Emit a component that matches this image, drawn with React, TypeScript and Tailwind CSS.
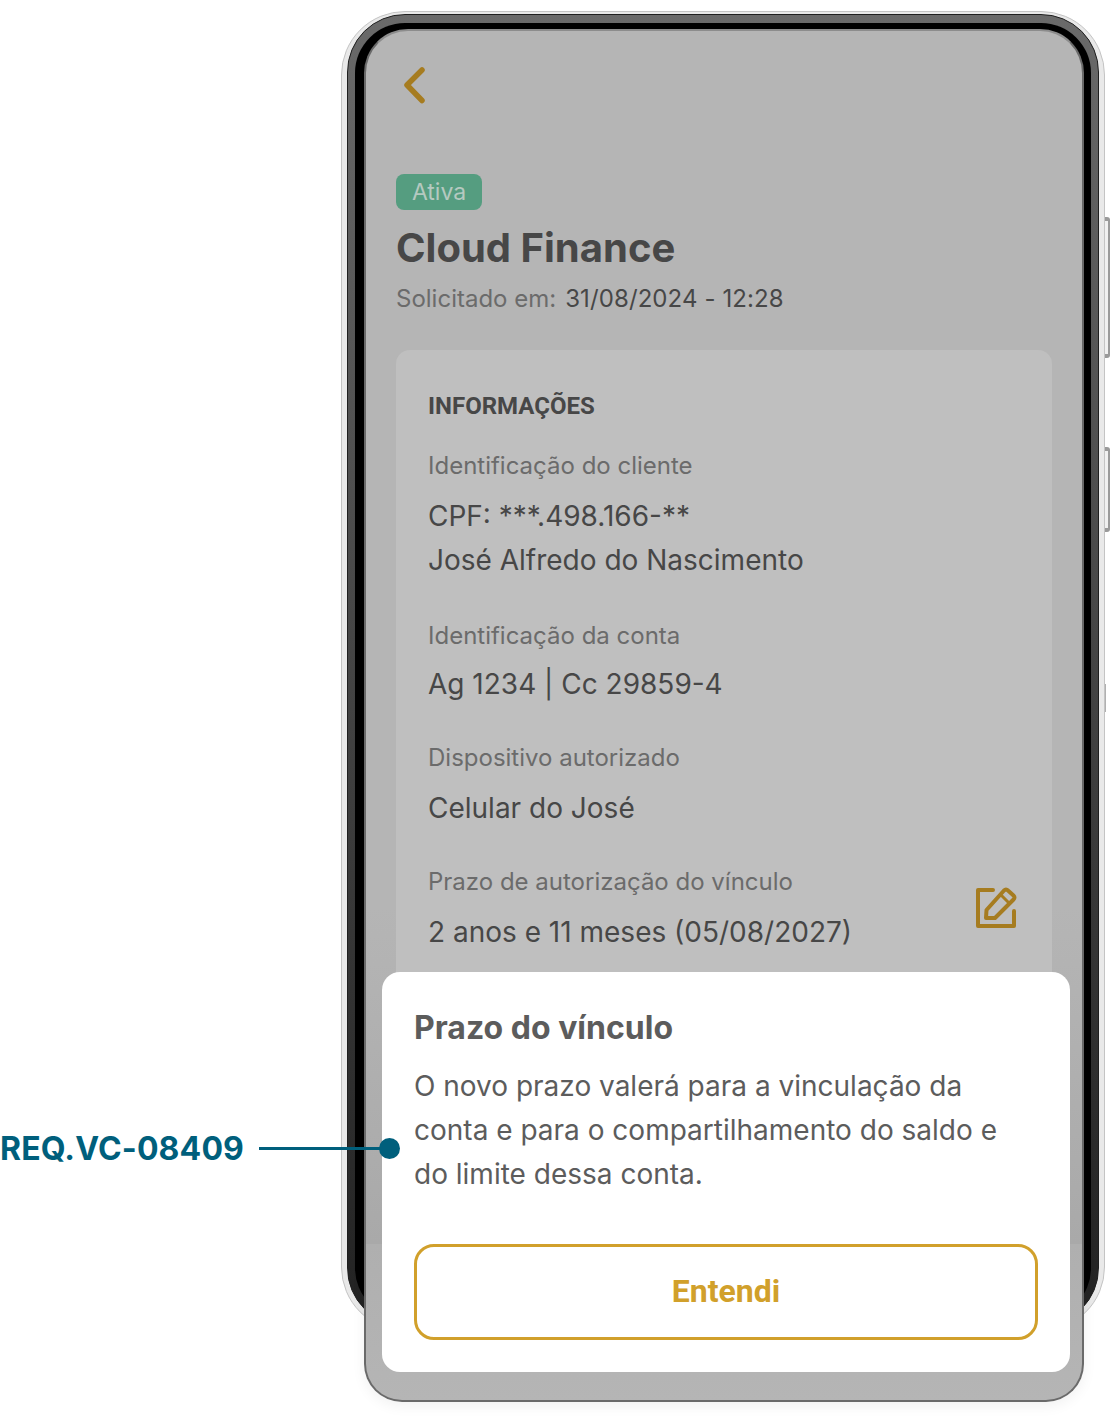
const gold = "#a67c20";

function Field({ label, children, className, valueGap }: { label: string; children: React.ReactNode; className?: string; valueGap: string }) {
  return (
    <div className={className}>
      <p className="text-[24px] leading-[36px] text-[#6b6b6b]">{label}</p>
      <div className={`${valueGap} text-[28px] leading-[44px] text-[#474747]`}>{children}</div>
    </div>
  );
}

function PhoneFrame() {
  return (
    <div className="absolute left-[341px] top-[11px] h-[1320px] w-[764px] rounded-[64px] border-[1px] border-[#c4c4c4] bg-[#e9e9e9] px-[5px] pt-[2px] pb-[4px]">
      <div className="h-full w-full rounded-[58px] border-[1px] border-[#1f1f1f] bg-gradient-to-b from-[#6a6a6a] via-[#444444] to-[#222222] px-[7px] pt-[8px] pb-[7px]">
        <div className="h-full w-full rounded-[50px] bg-black" />
      </div>
    </div>
  );
}

function SideButtons() {
  return (
    <>
      <div className="absolute left-[1105px] top-[217px] h-[141px] w-[5px] rounded-r-[3px] border-y-[4px] border-r-[2px] border-[#9a9a9a] bg-[#f0f0f0]" />
      <div className="absolute left-[1105px] top-[447px] h-[85px] w-[5px] rounded-r-[3px] border-y-[4px] border-r-[2px] border-[#9a9a9a] bg-[#f0f0f0]" />
      <div className="absolute left-[1105px] top-[684px] h-[28px] w-[1px] bg-[#b0b0b0]" />
    </>
  );
}

export default function App() {
  return (
    <div className="relative h-[1428px] w-[1118px] overflow-hidden bg-white font-['Inter',sans-serif]">
      <PhoneFrame />
      <SideButtons />

      <div className="relative ml-[364px] pt-[29px]">
        <div className="relative h-[1373px] w-[720px] overflow-hidden rounded-t-[44px] rounded-b-[38px] border-[2px] border-[#6a6a6a] border-t-[#8c8c8c] bg-[linear-gradient(#b5b5b5_0%,#b5b5b5_64%,#a9a9a9_88.6%,#afafaf_88.6%,#b5b5b5_100%)] shadow-[0_4px_14px_rgba(0,0,0,0.06)]">
          <div className="px-[30px] pt-[35px]">
            <svg width="26" height="38" viewBox="0 0 26 38" className="ml-[5px]" fill="none">
              <path d="M21 4 L6 19 L21 34.5" stroke={gold} strokeWidth="5.5" strokeLinecap="round" strokeLinejoin="round" />
            </svg>

            <div className="mt-[70px] flex h-[36px] w-[86px] items-center justify-center rounded-[8px] bg-[#559d80] text-[23px] text-[#b5c9c0]">
              Ativa
            </div>
            <h1 className="mt-[12px] text-[40px] font-bold leading-[52px] text-[#474747]">Cloud Finance</h1>
            <p className="mt-[7px] flex gap-[9px] text-[24px] leading-[36px] text-[#6b6b6b]">
              Solicitado em:
              <span className="tracking-[0.1px] text-[#474747]">31/08/2024 - 12:28</span>
            </p>

            <section className="mt-[33px] h-[800px] w-[656px] rounded-[14px] bg-[#bfbfbf] px-[32px] pt-[38px]">
              <h2 className="font-['Roboto',sans-serif] text-[24px] font-bold leading-[36px] text-[#474747]">INFORMAÇÕES</h2>
              <Field label="Identificação do cliente" className="mt-[24px]" valueGap="mt-[10px]">
                <p>CPF: ***.498.166-**</p>
                <p>José Alfredo do Nascimento</p>
              </Field>
              <Field label="Identificação da conta" className="mt-[36px]" valueGap="mt-[8px]">
                Ag 1234 | Cc 29859-4
              </Field>
              <Field label="Dispositivo autorizado" className="mt-[34px]" valueGap="mt-[10px]">
                Celular do José
              </Field>
              <div className="mt-[34px] flex items-center justify-between">
                <Field label="Prazo de autorização do vínculo" valueGap="mt-[10px]">
                  2 anos e 11 meses (05/08/2027)
                </Field>
                <svg width="44" height="44" viewBox="0 0 44 44" fill="none" className="mr-[2px] mt-[-3px]">
                  <path d="M19 4 H4 V40 H40 V25" stroke={gold} strokeWidth="4" strokeLinecap="round" strokeLinejoin="round" />
                  <path d="M12 32 L12.5 24 L30 4.5 Q32 2.5 34 4.5 L39.5 9.5 Q41.5 11.5 39.5 13.5 L21 32 Z" stroke={gold} strokeWidth="4" strokeLinejoin="round" />
                  <path d="M27 9 L35 17" stroke={gold} strokeWidth="3" />
                </svg>
              </div>
            </section>
          </div>

          <div className="absolute left-[16px] top-[941px] h-[400px] w-[688px] rounded-[18px] bg-white px-[32px] pt-[34px]">
            <h3 className="text-[32px] font-bold leading-[44px] text-[#5c5c5c]">Prazo do vínculo</h3>
            <p className="mt-[14px] text-[28px] leading-[44px] text-[#5c5c5c]">
              O novo prazo valerá para a vinculação da
              <br />
              conta e para o compartilhamento do saldo e
              <br />
              do limite dessa conta.
            </p>
            <button className="mt-[48px] flex h-[96px] w-[624px] items-center justify-center rounded-[20px] border-[3px] border-[#d1a02b] pb-[3px] font-['Roboto',sans-serif] text-[32px] font-bold text-[#d1a02b]">
              Entendi
            </button>
          </div>
        </div>
      </div>

      <div className="absolute left-0 top-[1128px] flex h-[40px] items-center">
        <span className="relative top-[1px] text-[32px] font-bold tracking-[0.15px] text-[#005f7c]">REQ.VC-08409</span>
        <div className="ml-[15px] h-[3px] w-[122px] bg-[#005f7c]" />
        <div className="ml-[-2px] h-[21px] w-[21px] rounded-full bg-[#005f7c]" />
      </div>
    </div>
  );
}
